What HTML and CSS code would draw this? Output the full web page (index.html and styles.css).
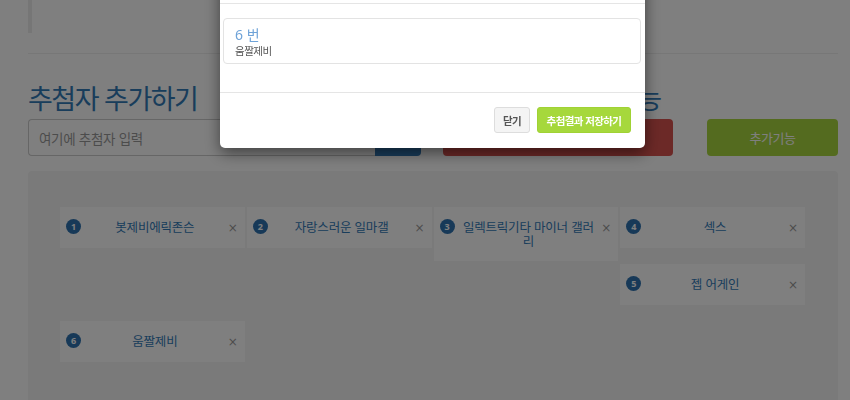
FILE: index.html
```html
<!DOCTYPE html>
<html lang="ko">
<head>
<meta charset="utf-8">
<title>추첨자 추가하기</title>
<link rel="stylesheet" href="styles.css">
</head>
<body>
<div class="page">
  <div class="quote"></div>
  <hr class="rule">
  <div class="row">
    <div class="col-left">
      <h2 class="title">추첨자 추가하기</h2>
      <div class="input-group">
        <input class="input" type="text" placeholder="여기에 추첨자 입력">
        <button class="btn btn-blue">추가</button>
      </div>
    </div>
    <div class="col-right">
      <h2 class="title title-right">추첨 및 추가기능</h2>
      <div class="btns">
        <button class="btn btn-red">추첨하기</button>
        <button class="btn btn-green">추가기능</button>
      </div>
    </div>
  </div>
  <div class="well">
    <div class="card"><span class="badge">1</span><span class="name">봇제비에릭존슨</span><span class="close">×</span></div>
    <div class="card"><span class="badge">2</span><span class="name">자랑스러운 일마갤</span><span class="close">×</span></div>
    <div class="card"><span class="badge">3</span><span class="name">일렉트릭기타 마이너 갤러리</span><span class="close">×</span></div>
    <div class="card"><span class="badge">4</span><span class="name">섹스</span><span class="close">×</span></div>
    <div class="card"><span class="badge">5</span><span class="name">젭 어게인</span><span class="close">×</span></div>
    <div class="card"><span class="badge">6</span><span class="name">움짤제비</span><span class="close">×</span></div>
  </div>
</div>
<div class="backdrop"></div>
<div class="modal">
  <div class="modal-header"><h4 class="modal-title">추첨 결과</h4></div>
  <div class="modal-body">
    <div class="result">
      <div class="result-num">6 번</div>
      <div class="result-name">움짤제비</div>
    </div>
  </div>
  <div class="modal-footer">
    <button class="mbtn mbtn-close">닫기</button>
    <button class="mbtn mbtn-save">추첨결과 저장하기</button>
  </div>
</div>
</body>
</html>
```

FILE: styles.css
```css
html, body {
  margin: 0;
  padding: 0;
  background: #fff;
  overflow: hidden;
  height: 400px;
}
body {
  font-family: "Noto Sans CJK KR", "Noto Sans", sans-serif;
  color: #333;
}
.page {
  width: 810px;
  margin-left: 28px;
}
.quote {
  height: 33px;
  border-left: 4px solid #ececec;
}
.rule {
  margin: 20px 0 0;
  border: 0;
  border-top: 1px solid #eee;
}
.row {
  display: flex;
  gap: 22px;
  margin-top: 28px;
}
.col-left {
  width: 393px;
}
.col-right {
  width: 395px;
}
.title {
  margin: 0 0 6px;
  font-size: 27px;
  line-height: 31px;
  font-weight: 400;
  letter-spacing: -1.5px;
  color: #337ab7;
  white-space: nowrap;
}
.title-right {
  padding-left: 42px;
}
.input-group {
  display: flex;
  height: 37px;
}
.input {
  flex: 1;
  box-sizing: border-box;
  height: 37px;
  border: 1px solid #ccc;
  border-right: 0;
  border-radius: 4px 0 0 4px;
  padding: 0 10px;
  font-family: inherit;
  font-size: 13.5px;
  letter-spacing: -0.3px;
  color: #555;
  outline: none;
}
.input::placeholder {
  color: #999;
}
.btn {
  font-family: inherit;
  border: 0;
  color: #fff;
  font-size: 13px;
  height: 37px;
  padding: 0;
}
.btn-blue {
  width: 46px;
  background: #337ab7;
  border-radius: 0 4px 4px 0;
}
.btns {
  display: flex;
  justify-content: space-between;
}
.btn-red {
  width: 230px;
  background: #d9534f;
  border-radius: 4px;
}
.btn-green {
  width: 131px;
  background: #a8d63e;
  border-radius: 4px;
  letter-spacing: -0.5px;
}
.well {
  box-sizing: border-box;
  width: 810px;
  margin-top: 15px;
  padding: 36px 32px 60px 31px;
  background: #f4f4f4;
  border-radius: 4px;
  min-height: 240px;
}
.well::after {
  content: "";
  display: block;
  clear: both;
}
.card {
  float: left;
  box-sizing: border-box;
  width: calc(25% - 2px);
  margin: 0 1px 16px;
  background: #fff;
  display: flex;
  align-items: flex-start;
  padding: 13px 7px 13px 6px;
}
.badge {
  flex: none;
  width: 15px;
  height: 15px;
  margin-top: -1px;
  border-radius: 50%;
  background: #2f73b0;
  color: #fff;
  font-family: "Open Sans", sans-serif;
  font-weight: 700;
  font-size: 9px;
  line-height: 15px;
  text-align: center;
}
.name {
  flex: 1;
  text-align: center;
  font-size: 12.5px;
  line-height: 14px;
  letter-spacing: -0.2px;
  color: #337ab7;
  padding: 0 2px 0 3px;
}
.close {
  flex: none;
  font-family: "DejaVu Sans", sans-serif;
  font-size: 12px;
  line-height: 14px;
  color: #999;
  margin-top: 1px;
}
.backdrop {
  position: fixed;
  inset: 0;
  background: rgba(0, 0, 0, 0.5);
}
.modal {
  position: fixed;
  left: 220px;
  top: -56px;
  width: 425px;
  background: #fff;
  border-radius: 5px;
  box-shadow: 0 5px 15px rgba(0, 0, 0, 0.5);
}
.modal-header {
  height: 60px;
  box-sizing: border-box;
  border-bottom: 1px solid #e5e5e5;
  padding: 15px;
}
.modal-title {
  margin: 0;
  font-size: 16px;
  font-weight: 500;
}
.modal-body {
  padding: 14px 4px 28px 3px;
}
.result {
  border: 1px solid #e3e3e3;
  border-radius: 4px;
  padding: 7px 11px 5px;
}
.result-num {
  font-family: "Noto Sans", "Noto Sans CJK KR", sans-serif;
  font-size: 14px;
  line-height: 18px;
  color: #6fa3d8;
}
.result-name {
  font-size: 10.5px;
  line-height: 14px;
  letter-spacing: -0.5px;
  color: #555;
}
.modal-footer {
  border-top: 1px solid #e5e5e5;
  padding: 14px 14px 15px;
  display: flex;
  justify-content: flex-end;
  gap: 7px;
}
.mbtn {
  font-family: inherit;
  height: 26px;
  box-sizing: border-box;
  border-radius: 3px;
  font-size: 10.5px;
  font-weight: 700;
  letter-spacing: -0.6px;
  padding: 0;
}
.mbtn-close {
  width: 36px;
  background: #f4f4f4;
  border: 1px solid #ddd;
  color: #555;
}
.mbtn-save {
  width: 94px;
  background: #a6d83c;
  border: 1px solid #a0d234;
  color: #fff;
}
```
